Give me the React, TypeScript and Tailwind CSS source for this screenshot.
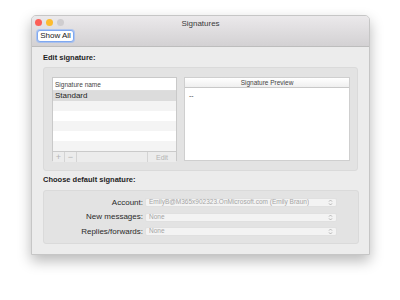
import React from "react";

function Chevrons() {
  return (
    <svg width="5" height="7" viewBox="0 0 5 7" className="shrink-0">
      <path d="M1 2.6 L2.5 1 L4 2.6 M1 4.4 L2.5 6 L4 4.4" fill="none" stroke="#a8a8a8" strokeWidth="0.8" />
    </svg>
  );
}

function SelectRow({ label, value }: { label: string; value: string }) {
  return (
    <div className="flex h-[9px] items-center">
      <div className="w-[101px] pr-[2px] text-right text-[8px] leading-none text-[#2a2a2a]">{label}</div>
      <div className="flex h-[9px] w-[192px] items-center justify-between rounded-[2px] border border-[#e0e0e0] bg-[#f3f3f3] pl-[3px] pr-[3px]">
        <span className="truncate text-[6.5px] leading-none text-[#a5a5a5]">{value}</span>
        <Chevrons />
      </div>
    </div>
  );
}

export default function App() {
  const stripes = ["bg-[#f4f4f4]", "bg-white", "bg-[#f4f4f4]", "bg-white", "bg-[#f4f4f4]"];

  return (
    <div
      className="h-[300px] w-[400px] overflow-hidden bg-white pl-[31px] pt-[15px]"
      style={{ fontFamily: '"Liberation Sans", Arial, sans-serif' }}
    >
      <div className="flex h-[240px] w-[339px] flex-col overflow-hidden rounded-t-[5px] border border-[#c6c6c6] bg-[#ececec] shadow-[0_6px_14px_rgba(0,0,0,0.28)]">
        {/* title bar */}
        <div className="relative h-[31px] shrink-0 border-b border-[#bdbdbd] bg-gradient-to-b from-[#ebe9eb] to-[#d3d1d3]">
          <div className="flex items-center gap-[4px] pl-[3px] pt-[3px]">
            <span className="h-[7px] w-[7px] rounded-full bg-[#fc5f57]" />
            <span className="h-[7px] w-[7px] rounded-full bg-[#fdbc2e]" />
            <span className="h-[7px] w-[7px] rounded-full bg-[#cfcdcf]" />
          </div>
          <div className="absolute left-0 right-0 top-[3px] text-center text-[8px] leading-[10px] text-[#3a3a3a]">Signatures</div>
          <div className="pl-[5px] pt-[4px]">
            <div className="flex h-[12px] w-[37px] items-center justify-center rounded-[3px] border border-[#7fa8f0] bg-white text-[8px] leading-none text-[#222] shadow-[0_0_0_1px_rgba(140,180,250,0.6)]">
              Show All
            </div>
          </div>
        </div>

        {/* body */}
        <div className="flex flex-col px-[11px] pt-[6px]">
          <div className="h-[10px] text-[7.5px] font-bold leading-[10px] text-[#1e1e1e]">Edit signature:</div>
          <div className="mt-[4px] flex h-[104px] w-[315px] gap-[7px] rounded-[3px] border border-[#dadada] bg-[#e3e3e3] pl-[8px] pt-[9px]">
            {/* list */}
            <div className="flex h-[84px] w-[125px] flex-col border border-[#c9c9c9] bg-white">
              <div className="h-[13px] shrink-0 border-b border-[#dedede] pl-[2px] text-[6.5px] leading-[13px] text-[#444]">
                Signature name
              </div>
              <div className="h-[10px] shrink-0 bg-[#dcdcdc] pl-[2px] text-[8px] leading-[10px] text-[#1e1e1e]">Standard</div>
              {stripes.map((c, i) => (
                <div key={i} className={"h-[10px] shrink-0 " + c} />
              ))}
              <div className="mt-auto flex h-[11px] shrink-0 border-t border-[#cacaca] bg-[#ececec]">
                <div className="flex w-[12px] items-center justify-center border-r border-[#d4d4d4] text-[9px] leading-none text-[#b4b4b4]">+</div>
                <div className="flex w-[12px] items-center justify-center border-r border-[#d4d4d4] text-[9px] leading-none text-[#b4b4b4]">−</div>
                <div className="ml-auto flex w-[29px] items-center justify-center border-l border-[#d4d4d4] text-[7px] leading-none text-[#b4b4b4]">
                  Edit
                </div>
              </div>
            </div>
            {/* preview */}
            <div className="flex h-[84px] w-[166px] flex-col border border-[#cfcfcf] bg-white">
              <div className="h-[10px] shrink-0 border-b border-[#c8c8c8] bg-gradient-to-b from-white to-[#efefef] text-center text-[6.5px] leading-[10px] text-[#444]">
                Signature Preview
              </div>
              <div className="pl-[4px] pt-[4px] text-[7px] leading-none text-[#444]">--</div>
            </div>
          </div>

          <div className="mt-[4px] h-[10px] text-[7.5px] font-bold leading-[10px] text-[#1e1e1e]">Choose default signature:</div>
          <div className="mt-[5px] flex h-[54px] w-[316px] flex-col gap-[5.5px] rounded-[3px] border border-[#dadada] bg-[#e3e3e3] pt-[7px]">
            <SelectRow label="Account:" value="EmilyB@M365x902323.OnMicrosoft.com (Emily Braun)" />
            <SelectRow label="New messages:" value="None" />
            <SelectRow label="Replies/forwards:" value="None" />
          </div>
        </div>
      </div>
    </div>
  );
}
